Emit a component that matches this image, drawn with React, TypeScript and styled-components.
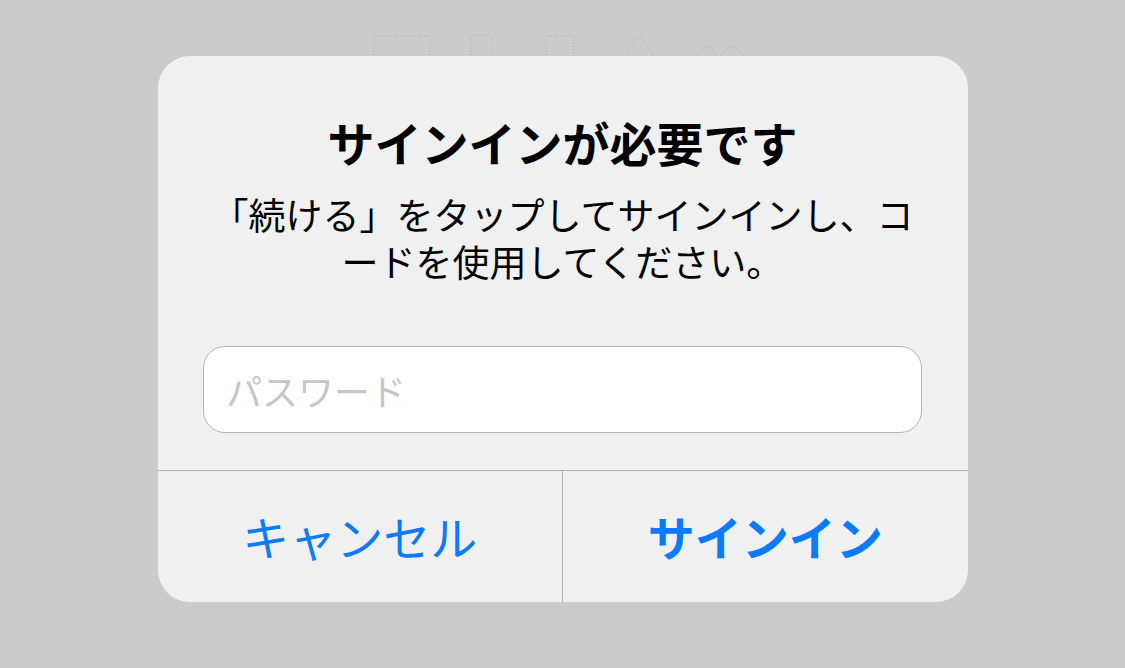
import React from 'react';
import styled, {createGlobalStyle} from 'styled-components';

const GlobalStyle = createGlobalStyle`
  html, body {
    margin: 0;
    padding: 0;
    width: 100%;
    height: 100%;
    background: #cbcbcb;
    overflow: hidden;
  }
  body {
    font-family: "Noto Sans CJK JP", "Noto Sans", sans-serif;
  }
`;

const Screen = styled.div`
  position: relative;
  width: 1125px;
  height: 668px;
  background: #cbcbcb;
`;

const Backdrop = styled.div`
  display: flex;
  justify-content: center;
  padding-top: 34px;
`;

const Overlay = styled.div`
  position: absolute;
  inset: 0;
  display: flex;
  justify-content: center;
  align-items: flex-start;
  padding-top: 56px;
`;

const Alert = styled.div`
  display: flex;
  flex-direction: column;
  width: 810px;
  height: 546px;
  background: #f0f0f0;
  border-radius: 32px;
  overflow: hidden;
`;

const Body = styled.div`
  display: flex;
  flex-direction: column;
  align-items: center;
  padding: 57px 45px 37px;
`;

const Title = styled.h1`
  margin: 0;
  font-size: 47px;
  line-height: 58px;
  font-weight: 700;
  color: #000;
  text-align: center;
`;

const Message = styled.p`
  margin: 20px 0 0;
  font-size: 37px;
  line-height: 47px;
  font-weight: 400;
  color: #000;
  text-align: center;
`;

const Line = styled.span`
  display: block;
`;

const Field = styled.input`
  box-sizing: border-box;
  margin-top: 61px;
  width: 719px;
  height: 87px;
  padding: 0 22px;
  border: 1px solid #b4b4b4;
  border-radius: 22px;
  background: #fff;
  font-family: inherit;
  font-size: 36px;
  color: #000;
  outline: none;

  &::placeholder {
    color: #c6c6c6;
  }
`;

const Actions = styled.div`
  display: flex;
  flex: 1;
  border-top: 1px solid #b2b2b2;
`;

const Action = styled.button<{$primary?: boolean}>`
  flex: 1;
  display: flex;
  align-items: center;
  justify-content: center;
  padding: 0 0 2px;
  border: none;
  background: transparent;
  font-family: inherit;
  font-size: 47px;
  font-weight: ${(p) => (p.$primary ? 700 : 400)};
  color: #0a7aff;
  cursor: pointer;

  & + & {
    border-left: 1px solid #b2b2b2;
  }
`;

const DottedIcons = () => (
  <svg width="380" height="30" viewBox="0 0 380 30" fill="none" stroke="#a9a9a9" strokeWidth="1" strokeDasharray="1 2">
    <path d="M1 30 V2 H57 V30" />
    <path d="M98 30 V4 L101 1 H116 L119 4 V30" />
    <path d="M173 30 V2 H201 V30" />
    <path d="M253 30 V20 Q256 12 260 10 L262 6 Q266 0 270 6 L272 10 Q276 12 279 20 V30" />
    <path d="M321 24 Q328 14 334 13 Q340 14 344 24" />
    <path d="M347 24 Q353 14 359 13 Q366 14 370 24" />
  </svg>
);

const App = () => {
  return (
    <Screen>
      <GlobalStyle />
      <Backdrop>
        <DottedIcons />
      </Backdrop>
      <Overlay>
        <Alert>
          <Body>
            <Title>サインインが必要です</Title>
            <Message>
              <Line>「続ける」をタップしてサインインし、コ</Line>
              <Line>ードを使用してください。</Line>
            </Message>
            <Field type="password" placeholder="パスワード" />
          </Body>
          <Actions>
            <Action>キャンセル</Action>
            <Action $primary>サインイン</Action>
          </Actions>
        </Alert>
      </Overlay>
    </Screen>
  );
};

export default App;
